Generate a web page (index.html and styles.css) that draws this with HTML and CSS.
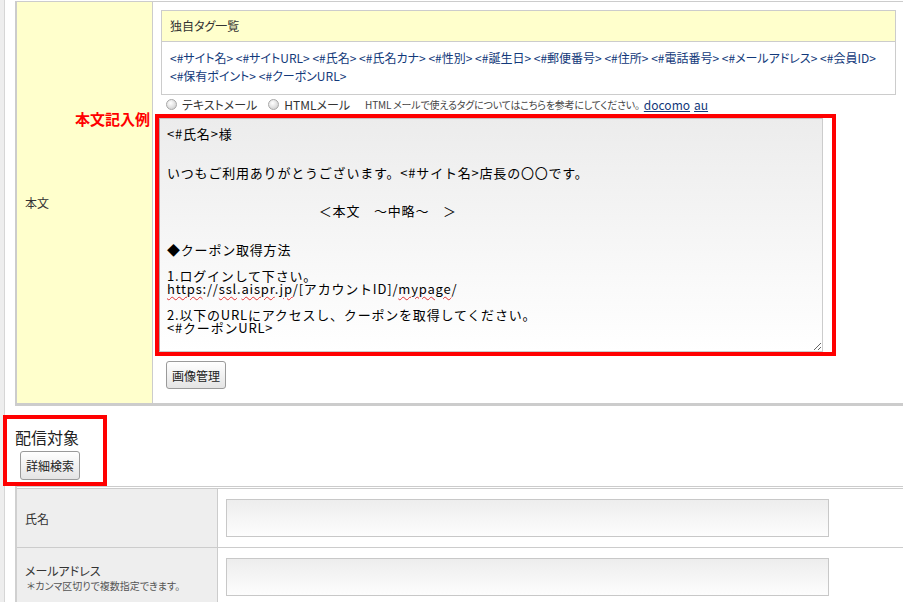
FILE: index.html
```html
<!DOCTYPE html>
<html lang="ja">
<head>
<meta charset="utf-8">
<title>メール配信</title>
<link rel="stylesheet" href="styles.css">
</head>
<body>
<div class="page">
  <div class="side"></div>
  <div class="main">
    <div class="top-table">
      <div class="th th-yellow">本文<span class="note-red">本文記入例</span></div>
      <div class="td">
        <div class="tagbox">
          <div class="tagbox-head">独自タグ一覧</div>
          <div class="tagbox-body">
            <a class="tag">&lt;#サイト名&gt;</a> <a class="tag">&lt;#サイトURL&gt;</a> <a class="tag">&lt;#氏名&gt;</a> <a class="tag">&lt;#氏名カナ&gt;</a> <a class="tag">&lt;#性別&gt;</a> <a class="tag">&lt;#誕生日&gt;</a> <a class="tag">&lt;#郵便番号&gt;</a> <a class="tag">&lt;#住所&gt;</a> <a class="tag">&lt;#電話番号&gt;</a> <a class="tag">&lt;#メールアドレス&gt;</a> <a class="tag">&lt;#会員ID&gt;</a> <a class="tag">&lt;#保有ポイント&gt;</a> <a class="tag">&lt;#クーポンURL&gt;</a>
          </div>
        </div>
        <div class="radio-row">
          <span class="radio"></span><span class="radio-label">テキストメール</span>
          <span class="radio"></span><span class="radio-label second">HTMLメール</span>
          <span class="small">HTML メールで使えるタグについてはこちらを参考にしてください。</span>
          <a class="link">docomo</a> <a class="link">au</a>
        </div>
        <div class="red-frame">
          <div class="textarea">&lt;#氏名&gt;様


いつもご利用ありがとうございます。&lt;#サイト名&gt;店長の〇〇です。


　　　　　　　　　　　＜本文　～中略～　＞


◆クーポン取得方法

1.ログインして下さい。
<span class="sp">https</span>://<span class="sp">ssl</span>.<span class="sp">aispr</span>.<span class="sp">jp</span>/[アカウントID]/<span class="sp">mypage</span>/

2.以下のURLにアクセスし、クーポンを取得してください。
&lt;#クーポンURL&gt;</div>
        </div>
        <button class="btn btn-image">画像管理</button>
      </div>
    </div>

    <div class="section-head">
      <h2 class="section-title">配信対象</h2>
      <button class="btn btn-search">詳細検索</button>
    </div>

    <div class="bottom-table">
      <div class="row">
        <div class="th th-gray">氏名</div>
        <div class="td td-input"><div class="input"></div></div>
      </div>
      <div class="row">
        <div class="th th-gray th-stack">
          <div>メールアドレス</div>
          <div class="hint">＊カンマ区切りで複数指定できます。</div>
        </div>
        <div class="td td-input"><div class="input"></div></div>
      </div>
    </div>
  </div>
</div>
</body>
</html>
```

FILE: styles.css
```css
* { box-sizing: border-box; }
html, body { margin: 0; padding: 0; }
body {
  width: 903px;
  height: 602px;
  overflow: hidden;
  background: #fff;
  color: #333;
  font-family: "Noto Sans CJK JP", "Noto Sans", sans-serif;
  font-size: 12px;
  font-feature-settings: "palt";
}
.page { display: flex; min-height: 602px; }
.side {
  flex: none;
  width: 5px;
  background: #eeeeee;
  border-right: 1px solid #d6d6d6;
}
.main { flex: 1; min-width: 0; padding: 1px 0 0 10px; }

/* upper table */
.top-table {
  display: grid;
  grid-template-columns: 136px 1fr;
  border-top: 1px solid #ccc;
  border-left: 2px solid #ccc;
  border-bottom: 3px solid #ccc;
}
.th {
  display: flex;
  align-items: center;
  padding-left: 8px;
  position: relative;
}
.th-yellow {
  background: #ffffcc;
  border-right: 1px solid #ccc;
  line-height: 16px;
}
.note-red {
  position: absolute;
  right: 2px;
  top: 108px;
  color: #ff0000;
  font-weight: bold;
  font-size: 15px;
  line-height: 18px;
  letter-spacing: 0;
}
.td { padding: 8px 0 14px 6px; min-width: 0; }

.tagbox {
  margin: 0 7px 0 2px;
  border: 1px solid #ccc;
}
.tagbox-head {
  background: #ffffcc;
  border-bottom: 1px solid #ccc;
  height: 31px;
  line-height: 30px;
  padding-left: 8px;
  color: #333;
}
.tagbox-body {
  padding: 7px 8px 9px 8px;
  line-height: 18px;
}
.tag { color: #12397a; text-decoration: none; white-space: nowrap; }

.radio-row {
  display: flex;
  align-items: center;
  height: 19px;
  padding-left: 7px;
  white-space: nowrap;
}
.radio {
  width: 11px;
  height: 11px;
  border-radius: 50%;
  border: 1px solid #a8a8a8;
  background: radial-gradient(circle at 40% 35%, #ffffff 0%, #e6e6e6 45%, #c4c4c4 100%);
  margin-right: 5px;
  flex: none;
}
.radio-label { margin-right: 11px; }
.radio-label.second { margin-right: 15px; }
.small {
  font-size: 10px;
  color: #444;
  margin-right: 4px;
  letter-spacing: -0.2px;
}
.link { color: #12397a; text-decoration: underline; margin-right: 4px; }

.red-frame {
  margin-left: -4px;
  width: 681px;
  height: 242px;
  border: 4px solid #ff0000;
}
.textarea {
  width: 664px;
  height: 234px;
  border: 1px solid #ccc;
  border-left-color: #a9a9a9;
  border-top-color: #c4c4c4;
  background: linear-gradient(#ececec, #ffffff);
  padding: 9px 7px;
  font-size: 13px;
  letter-spacing: 0.8px;
  line-height: 12.9px;
  color: #000;
  white-space: pre;
  font-feature-settings: normal;
  overflow: auto;
  resize: both;
}
.sp {
  text-decoration: underline wavy #e03030;
  text-decoration-thickness: 1px;
  text-underline-offset: 2px;
}

.btn {
  display: block;
  font-family: inherit;
  font-size: 12px;
  color: #222;
  border: 1px solid #9a9a9a;
  border-radius: 3px;
  background: linear-gradient(#ffffff, #e4e4e4);
  padding: 0 5px;
  white-space: nowrap;
  cursor: pointer;
  font-feature-settings: "palt";
}
.btn-image { margin: 5px 0 0 7px; height: 28px; }

/* section head */
.section-head {
  margin: 9px 0 0 -12px;
  width: 104px;
  border: 4px solid #ff0000;
  padding: 8px 0 2px 0;
}
.section-title {
  margin: 0 0 4px 8px;
  font-size: 16px;
  font-weight: normal;
  line-height: 20px;
  color: #222;
}
.btn-search { margin-left: 13px; height: 29px; }

/* lower table */
.bottom-table {
  border-top: 1px solid #ccc;
  border-left: 2px solid #d0d0d0;
  padding-top: 1px;
}
.row {
  display: grid;
  grid-template-columns: 201px 1fr;
  border-top: 1px solid #ccc;
}
.th-gray {
  background: #eeeeee;
  border-right: 1px solid #ccc;
  color: #333;
}
.th-stack {
  flex-direction: column;
  align-items: flex-start;
  justify-content: center;
  line-height: 15px;
  padding-top: 2px;
}
.hint { font-size: 10px; color: #555; padding-left: 2px; }
.td-input { padding: 10px 0 10px 8px; }
.input {
  width: 603px;
  height: 38px;
  border: 1px solid #c8c8c8;
  background: linear-gradient(#ededed, #fdfdfd);
}
```
